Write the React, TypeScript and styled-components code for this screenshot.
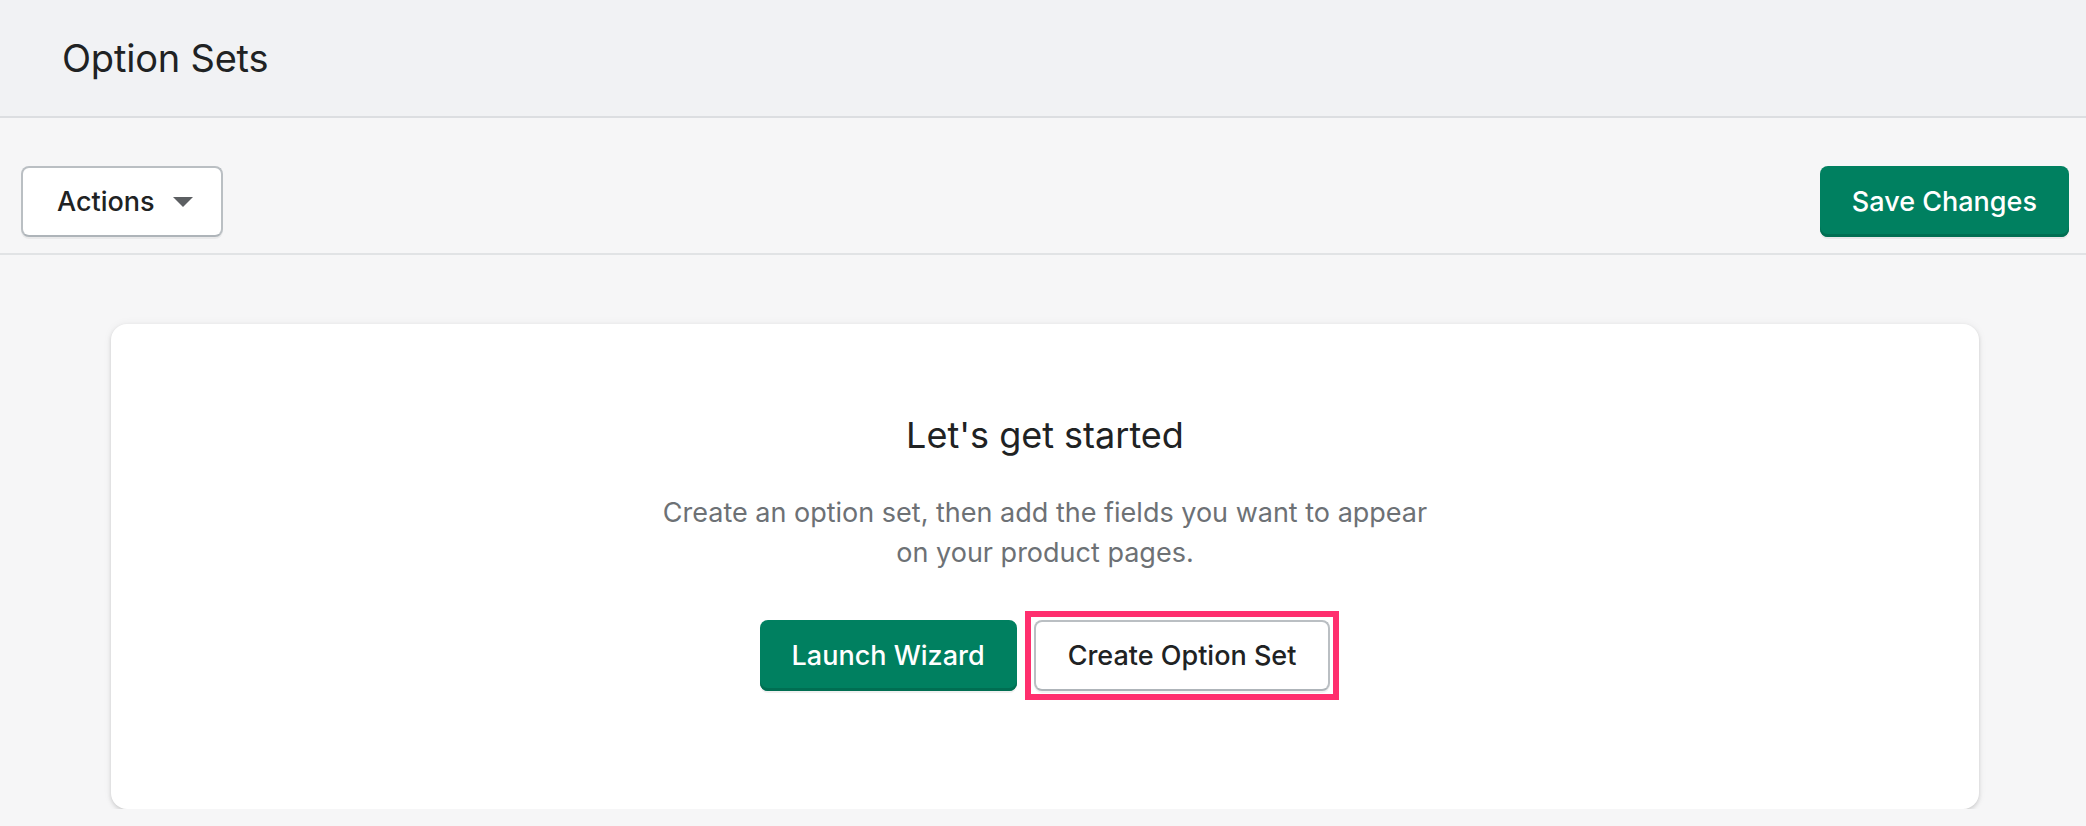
import styled, { createGlobalStyle } from 'styled-components';

const GlobalStyle = createGlobalStyle`
  * { box-sizing: border-box; }
  html, body { margin: 0; padding: 0; background: #f6f6f7; }
  body { font-family: Inter, "Noto Sans", sans-serif; color: #202223; }
`;

const Header = styled.header`
  height: 118px;
  display: flex;
  align-items: center;
  padding: 0 62px;
  background: #f1f2f4;
  border-bottom: 2px solid #dcdee1;
  h1 { margin: 0; font-size: 38px; font-weight: 400; line-height: 46px; letter-spacing: -0.2px; }
`;

const Toolbar = styled.div`
  display: flex;
  justify-content: space-between;
  align-items: center;
  padding: 48px 17px 16px 21px;
  border-bottom: 2px solid #e1e3e5;
`;

const Button = styled.button<{ $primary?: boolean }>`
  position: relative;
  height: 71px;
  display: inline-flex;
  align-items: center;
  justify-content: center;
  gap: 18px;
  padding: 0 32px;
  border-radius: 8px;
  font-family: inherit;
  font-size: 27px;
  font-weight: 500;
  cursor: pointer;
  background: ${(p) => (p.$primary ? '#008060' : '#fff')};
  color: ${(p) => (p.$primary ? '#fff' : '#202223')};
  border: ${(p) => (p.$primary ? '0' : '2px solid #babfc3')};
  border-bottom-color: ${(p) => (p.$primary ? 'transparent' : '#aeb4b9')};
  box-shadow: ${(p) =>
    p.$primary
      ? 'inset 0 -3px 0 #006e52, 0 2px 0 rgba(0,0,0,0.06)'
      : '0 2px 0 rgba(0,0,0,0.05)'};
`;

const ActionsButton = styled(Button)`
  padding: 0 28px 0 34px;
`;

// pink annotation frame drawn over the button
const Highlighted = styled(Button)`
  &::after {
    content: '';
    position: absolute;
    inset: -11px;
    border: 6px solid #ff2f6e;
    pointer-events: none;
  }
`;

const Main = styled.main`
  padding: 69px 107px 0 111px;
`;

const Card = styled.section`
  background: #fff;
  border-radius: 16px;
  box-shadow: 0 0 10px rgba(23, 24, 24, 0.05), 0 2px 4px rgba(0, 0, 0, 0.15);
  padding: 89px 0 118px;
  display: flex;
  flex-direction: column;
  align-items: center;
  text-align: center;
`;

const Title = styled.h2`
  margin: 0;
  font-size: 36px;
  font-weight: 400;
  line-height: 44px;
  color: #202223;
`;

const Text = styled.p`
  margin: 36px 0 47px;
  max-width: 800px;
  font-size: 27px;
  line-height: 40px;
  color: #6d7175;
`;

const ButtonRow = styled.div`
  display: flex;
  gap: 17px;
`;

const Caret = () => (
  <svg width="20" height="10" viewBox="0 0 20 10">
    <polygon points="0,0 20,0 10,10" fill="#5c5f62" />
  </svg>
);

export default function App() {
  return (
    <>
      <GlobalStyle />
      <Header>
        <h1>Option Sets</h1>
      </Header>
      <Toolbar>
        <ActionsButton>
          Actions
          <Caret />
        </ActionsButton>
        <Button $primary>Save Changes</Button>
      </Toolbar>
      <Main>
        <Card>
          <Title>Let's get started</Title>
          <Text>Create an option set, then add the fields you want to appear on your product pages.</Text>
          <ButtonRow>
            <Button $primary>Launch Wizard</Button>
            <Highlighted>Create Option Set</Highlighted>
          </ButtonRow>
        </Card>
      </Main>
    </>
  );
}
